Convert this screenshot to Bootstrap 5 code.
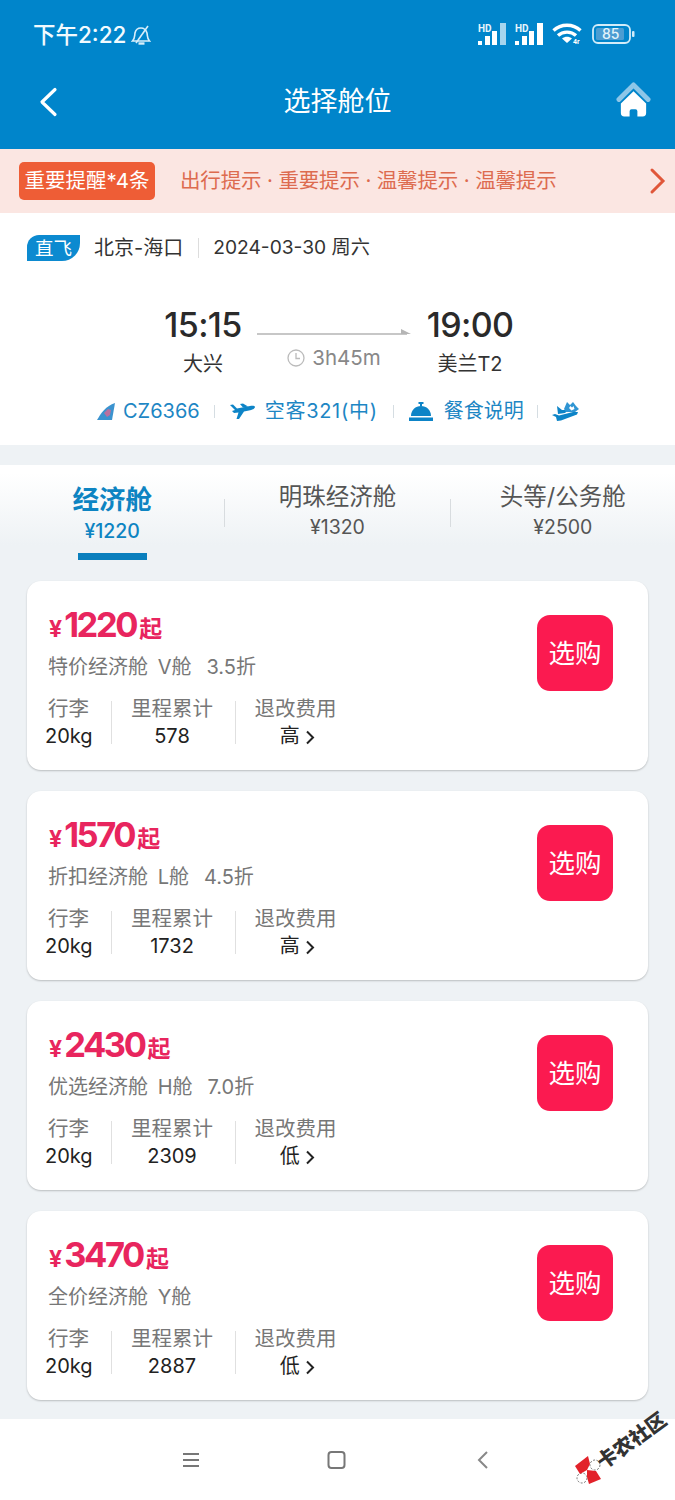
<!DOCTYPE html>
<html lang="zh">
<head>
<meta charset="utf-8">
<title>选择舱位</title>
<link href="https://cdn.jsdelivr.net/npm/bootstrap@5.3.0/dist/css/bootstrap.min.css" rel="stylesheet">
<style>
html,body{margin:0;height:1500px;overflow:hidden}
body{width:675px;background:#eef2f5;font-family:Inter,"Noto Sans CJK SC",sans-serif;color:#222;position:relative}
.hdr{background:#0085cb;height:149px;color:#fff}
.sbar{height:71px;padding:20px 40px 0 33px;font-size:22.500px;line-height:30px;font-weight:500;color:#f2fafe}
.titlebar{height:78px;padding:0 24px 0 38px}
.titlebar .ttl{font-size:27px;font-weight:400;line-height:62px}
.notice{height:64px;background:#fbe6e2;padding:0 8px 0 19px;color:#dd6b4f;font-size:20.500px}
.tagn{background:#ee5d36;color:#fff;border-radius:5px;width:136px;height:38px;line-height:38px;text-align:center;font-size:20.500px;white-space:nowrap}
.ntext{margin-left:25px;flex:1;white-space:nowrap;letter-spacing:-.15px}
.flight{background:#fff;height:232px;padding:0 27px}
.froute{height:71px;font-size:19.200px;color:#333;padding-bottom:2px}
.zf{width:53px;height:26px;background:#0c8ad0;color:#fff;border-radius:12px 0 18px 0;font-size:18.500px;line-height:26px;text-align:center;margin-right:14px;flex:none}
.rt{font-size:20px}
.vsep{width:1px;background:#ddd;flex:none}
.froute .vsep{height:20px;margin:0 14px 0 15px}
.times{height:79px;margin-top:21px;padding-left:129px}
.tcol{text-align:center;width:94px;flex:none}
.tm{font-size:34px;font-weight:500;line-height:40px;color:#2a2a2a;letter-spacing:-.6px;white-space:nowrap}
.pl{font-size:20px;line-height:30px;color:#333;margin-top:4px;white-space:nowrap}
.mid{width:154px;margin:0 12px 0 7px;padding-top:23px;flex:none}
.dur{color:#888;font-size:20.500px;line-height:28px;margin-top:6px;text-align:center}
.ilinks{height:32px;margin-top:11px;padding-left:70px;color:#1d86c4;font-size:20px;white-space:nowrap}
.ilinks .vsep{height:13px;background:#d5dde2}
.ac{letter-spacing:.7px}
.tabs{margin-top:20px;height:102px;background:linear-gradient(#fff 0,#fff 8px,#eef2f5 80px);display:flex;align-items:flex-start}
.tabi{flex:1;text-align:center;color:#555;padding-top:16px}
.tabi .nm{font-size:23.500px;line-height:32px}
.tabi .pr{font-size:19.500px;line-height:26px;margin-top:1px}
.tabi.on{color:#0d84c2;padding-top:18px}
.tabi.on .nm{font-size:26.500px;font-weight:700;line-height:32px}
.tabi.on .pr{font-weight:500;margin-top:2px;font-size:19.500px;line-height:28px}
.ubar{width:69px;height:7px;background:#0a7fbd;margin:8px auto 0}
.tdiv{width:1px;height:28px;background:#d8dcdf;margin-top:34px;flex:none}
.cards{padding:14px 27px 0 27px;display:flex;flex-direction:column;gap:21px}
.tcard{height:189px;background:#fff;border-radius:14px;box-shadow:0 1px 2px rgba(0,0,0,.22);padding:0 35px 0 22px;display:flex;justify-content:space-between}
.price{color:#e8255e;font-weight:700;font-size:34.500px;line-height:44px;margin-top:22px;display:flex;align-items:baseline;white-space:nowrap;letter-spacing:-2.400px}
.price .yen{font-size:23px;margin-right:2px;letter-spacing:0}
.price .qi{font-size:23px;margin-left:3px;letter-spacing:0}
.cabin{color:#777;font-size:20px;line-height:28px;margin-top:2px;margin-left:-1px;white-space:nowrap}
.cabin .cl{margin-left:4px}
.cabin .dis{margin-left:15px}
.meta{display:flex;margin-top:14px;align-items:center;margin-left:-3px}
.mc{text-align:center;white-space:nowrap}
.mc .a{color:#777;font-size:20.500px;line-height:28px}
.mc .b{color:#222;font-size:20px;line-height:28px;margin-top:-1px}
.meta .vsep{height:43px;background:#e0e0e0}
.m1{width:47px;margin-right:19px;margin-left:-1px}.m2{width:123px;padding-right:3px}.m3{width:119px}
.m3 .b{padding-left:4px}
.bbtn{width:76px;height:76px;background:#fb1a50;color:#fff;border:0;border-radius:13px;font-size:26.500px;padding:0;margin-top:34px;line-height:76px;flex:none}
.navb{position:absolute;left:0;right:0;bottom:0;height:81px;background:#fff}
.wm{position:absolute;left:631px;top:1440px;transform:translate(-50%,-50%) rotate(-36deg);font-size:20px;font-weight:900;color:#333;line-height:24px;white-space:nowrap;font-family:"Noto Sans CJK SC",sans-serif}
.wmi{position:absolute;left:574px;top:1454px}
</style>
</head>
<body>
<div class="hdr">
  <div class="sbar d-flex justify-content-between align-items-start">
    <div class="d-flex align-items-center" style="gap:5px"><span>下午2:22</span>
      <svg width="20" height="20" viewBox="0 0 20 20" fill="none" stroke="#d8eefa" stroke-width="1.600"><path d="M1.500 16c2.500-2.500 2-5 2.500-8 .6-3 3-5 6-5s5 2 6 5c.6 3 0 5.500 2.500 8z"/><path d="M17 1L5 18"/><path d="M7.500 18.500h6" stroke-width="2.400"/></svg>
    </div>
    <div class="d-flex align-items-center" style="margin-top:3px;gap:7px">
      <svg width="30" height="22" viewBox="0 0 30 22"><text x="0" y="8.500" font-size="10" font-weight="700" fill="#e6f5fc" font-family="Roboto">HD</text><g fill="#fff"><rect x="0" y="18" width="4" height="4"/><rect x="7" y="13" width="5" height="9"/><rect x="14" y="8" width="5" height="14"/></g><rect x="22" y="0" width="6" height="22" fill="#a6d5ee"/></svg>
      <svg width="30" height="22" viewBox="0 0 30 22"><text x="0" y="8.500" font-size="10" font-weight="700" fill="#e6f5fc" font-family="Roboto">HD</text><g fill="#fff"><rect x="0" y="18" width="4" height="4"/><rect x="7" y="13" width="5" height="9"/><rect x="14" y="8" width="5" height="14"/><rect x="22" y="0" width="6" height="22"/></g></svg>
      <svg width="31" height="22" viewBox="0 0 31 22" fill="none" stroke="#fff" stroke-width="3.400" style="margin-right:2px"><path d="M1.500 7.500C9 .5 21 .5 28.500 7.500"/><path d="M6 12.500c5-4.500 13-4.500 18 0"/><path d="M15 20l-5-4.500c3-2.500 7-2.500 10 0z" fill="#fff" stroke="none"/><text x="21" y="21" font-size="7" font-weight="700" fill="#fff" stroke="none" font-family="Roboto">4r</text></svg>
      <svg width="43" height="20" viewBox="0 0 43 20"><rect x="1" y="1" width="37" height="18" rx="5" fill="none" stroke="#d2ecf9" stroke-width="1.800"/><rect x="4" y="4" width="28" height="12" rx="1.500" fill="#4b9dd2"/><text x="10" y="15" font-size="14" font-weight="500" fill="#e4f4fb" font-family="Inter">85</text><rect x="40" y="7" width="2.500" height="6" rx="1" fill="#d2ecf9"/></svg>
    </div>
  </div>
  <div class="titlebar d-flex justify-content-between align-items-start position-relative">
    <svg class="mt-3" width="20" height="30" viewBox="0 0 20 30" fill="none" stroke="#fff" stroke-width="3.200" stroke-linecap="round" stroke-linejoin="round"><path d="M17 2.500L4 15l13 12.500"/></svg>
    <div class="ttl position-absolute start-0 end-0 text-center">选择舱位</div>
    <svg width="35" height="35" viewBox="0 0 36 36" style="margin-top:11px"><path d="M3 18L18 3l15 15" fill="none" stroke="#8dc6e8" stroke-width="5" stroke-linecap="round" stroke-linejoin="round"/><path d="M18 9.500L31 22v10a3.500 3.500 0 0 1-3.500 3.500H22V30a2 2 0 0 0-2-2h-4a2 2 0 0 0-2 2v5.500H8.500A3.500 3.500 0 0 1 5 32V22z" fill="#fff"/></svg>
  </div>
</div>
<div class="notice d-flex align-items-center">
  <div class="tagn">重要提醒*4条</div>
  <div class="ntext">出行提示 · 重要提示 · 温馨提示 · 温馨提示</div>
  <svg width="18" height="28" viewBox="0 0 18 28" fill="none" stroke="#e0573a" stroke-width="3" stroke-linecap="round"><path d="M3 3l11 11L3 25"/></svg>
</div>
<div class="flight">
  <div class="froute d-flex align-items-center">
    <div class="zf">直飞</div><span class="rt">北京-海口</span><div class="vsep"></div><span>2024-03-30 周六</span>
  </div>
  <div class="times d-flex">
    <div class="tcol"><div class="tm">15:15</div><div class="pl">大兴</div></div>
    <div class="mid">
      <svg class="d-block" width="154" height="10" viewBox="0 0 154 10"><path d="M0 6h150" stroke="#b5b5b5" stroke-width="1.500"/><path d="M144 1l10 5h-10z" fill="#b5b5b5"/></svg>
      <div class="dur d-flex align-items-center justify-content-center" style="gap:7px">
        <svg width="18" height="18" viewBox="0 0 18 18" fill="none" stroke="#bbb" stroke-width="1.300"><circle cx="9" cy="9" r="8"/><path d="M9 4v5.500h4"/></svg><span>3h45m</span></div>
    </div>
    <div class="tcol"><div class="tm">19:00</div><div class="pl">美兰T2</div></div>
  </div>
  <div class="ilinks d-flex align-items-center">
    <svg style="margin-right:8px" width="18" height="17" viewBox="0 0 18 17"><path d="M0 17C4 10 9 3 18 0l-3 17z" fill="#3b93cf"/><path d="M7 10l4-4 3 1-1 5-3 2z" fill="#b9709f"/></svg>
    <span>CZ6366</span><div class="vsep" style="margin:0 15px 0 14px"></div>
    <svg width="25" height="16" viewBox="0 0 25 16" style="margin-right:10px"><path d="M0 2l3-.5 4 4L20 3c3-.5 5 0 5 1 0 1.500-3 3-6 3.500l-5 1L9 16H6.500l2-6.500L4 10 2 8l3-1z" fill="#0d84c7"/><path d="M10 1l3-.5 5 3-5 1z" fill="#0d84c7"/></svg>
    <span class="ac">空客321(中)</span><div class="vsep" style="margin:0 15px"></div>
    <svg width="24" height="19" viewBox="0 0 24 19" style="margin-right:11px"><path d="M9.500 1h5M12 1v3" stroke="#0d84c7" stroke-width="2" fill="none"/><path d="M2 14C2 8 6.500 4 12 4s10 4 10 10z" fill="#0d84c7"/><rect x="0" y="15.500" width="24" height="3.500" fill="#0d84c7"/></svg>
    <span>餐食说明</span><div class="vsep" style="margin:0 14px 0 13px"></div>
    <svg width="28" height="20" viewBox="0 0 28 20"><path d="M0 14l3-1 4 1.500L21 11l5 0-1 2.500L9 19.500 5 20l-1-4z" fill="#0d84c7"/><path d="M5 5l5 4 6 0-3 3-7 1z" fill="#0d84c7"/><path d="M12 8l3-7 3 3 3-3 3 4 3 3-4 3-9 0z" fill="#2f95d3"/><path d="M17 7l1.500-2 1.500 1.500L21.500 5l1 3-3 1.500z" fill="#fff"/></svg>
  </div>
</div>
<div class="tabs">
  <div class="tabi on"><div class="nm">经济舱</div><div class="pr">¥1220</div><div class="ubar"></div></div>
  <div class="tdiv"></div>
  <div class="tabi"><div class="nm">明珠经济舱</div><div class="pr">¥1320</div></div>
  <div class="tdiv"></div>
  <div class="tabi"><div class="nm">头等/公务舱</div><div class="pr">¥2500</div></div>
</div>
<div class="cards">
  <div class="tcard">
    <div><div class="price"><span class="yen">¥</span>1220<span class="qi">起</span></div><div class="cabin">特价经济舱<span class="cl"> V舱</span><span class="dis">3.5折</span></div>
      <div class="meta"><div class="mc m1"><div class="a">行李</div><div class="b">20kg</div></div><div class="vsep"></div><div class="mc m2"><div class="a">里程累计</div><div class="b">578</div></div><div class="vsep"></div><div class="mc m3"><div class="a">退改费用</div><div class="b">高 <svg width="10" height="15" viewBox="0 0 10 15" fill="none" stroke="#222" stroke-width="2"><path d="M2 1.500l6 6-6 6"/></svg></div></div></div></div>
    <button class="btn bbtn">选购</button>
  </div>
  <div class="tcard">
    <div><div class="price"><span class="yen">¥</span>1570<span class="qi">起</span></div><div class="cabin">折扣经济舱<span class="cl"> L舱</span><span class="dis">4.5折</span></div>
      <div class="meta"><div class="mc m1"><div class="a">行李</div><div class="b">20kg</div></div><div class="vsep"></div><div class="mc m2"><div class="a">里程累计</div><div class="b">1732</div></div><div class="vsep"></div><div class="mc m3"><div class="a">退改费用</div><div class="b">高 <svg width="10" height="15" viewBox="0 0 10 15" fill="none" stroke="#222" stroke-width="2"><path d="M2 1.500l6 6-6 6"/></svg></div></div></div></div>
    <button class="btn bbtn">选购</button>
  </div>
  <div class="tcard">
    <div><div class="price"><span class="yen">¥</span>2430<span class="qi">起</span></div><div class="cabin">优选经济舱<span class="cl"> H舱</span><span class="dis">7.0折</span></div>
      <div class="meta"><div class="mc m1"><div class="a">行李</div><div class="b">20kg</div></div><div class="vsep"></div><div class="mc m2"><div class="a">里程累计</div><div class="b">2309</div></div><div class="vsep"></div><div class="mc m3"><div class="a">退改费用</div><div class="b">低 <svg width="10" height="15" viewBox="0 0 10 15" fill="none" stroke="#222" stroke-width="2"><path d="M2 1.500l6 6-6 6"/></svg></div></div></div></div>
    <button class="btn bbtn">选购</button>
  </div>
  <div class="tcard">
    <div><div class="price"><span class="yen">¥</span>3470<span class="qi">起</span></div><div class="cabin">全价经济舱<span class="cl"> Y舱</span></div>
      <div class="meta"><div class="mc m1"><div class="a">行李</div><div class="b">20kg</div></div><div class="vsep"></div><div class="mc m2"><div class="a">里程累计</div><div class="b">2887</div></div><div class="vsep"></div><div class="mc m3"><div class="a">退改费用</div><div class="b">低 <svg width="10" height="15" viewBox="0 0 10 15" fill="none" stroke="#222" stroke-width="2"><path d="M2 1.500l6 6-6 6"/></svg></div></div></div></div>
    <button class="btn bbtn">选购</button>
  </div>
</div>
<div class="navb">
  <svg class="position-absolute" style="left:181px;top:32px" width="20" height="18" viewBox="0 0 20 18" stroke="#777" stroke-width="2"><path d="M2 3h16M2 9h16M2 15h16"/></svg>
  <svg class="position-absolute" style="left:327px;top:31px" width="19" height="20" viewBox="0 0 19 20" fill="none" stroke="#777" stroke-width="2"><rect x="1.500" y="2" width="16" height="16" rx="3"/></svg>
  <svg class="position-absolute" style="left:476px;top:31px" width="14" height="20" viewBox="0 0 14 20" fill="none" stroke="#888" stroke-width="2"><path d="M11 2L3 10l8 8"/></svg>
</div>
<svg class="wmi" width="28" height="30" viewBox="0 0 28 30"><circle cx="21" cy="11" r="5" fill="#fff" stroke="#555" stroke-width=".8" stroke-dasharray="2 1.500"/><circle cx="8" cy="24" r="5" fill="#fff" stroke="#555" stroke-width=".8" stroke-dasharray="2 1.500"/><path d="M1 12L14 2l2 8-3 6-7 4z" fill="#e2222a"/><path d="M13 16l9 1 5 8-12 5-2-7z" fill="#e2222a"/></svg>
<div class="wm">卡农社区</div>
</body>
</html>
